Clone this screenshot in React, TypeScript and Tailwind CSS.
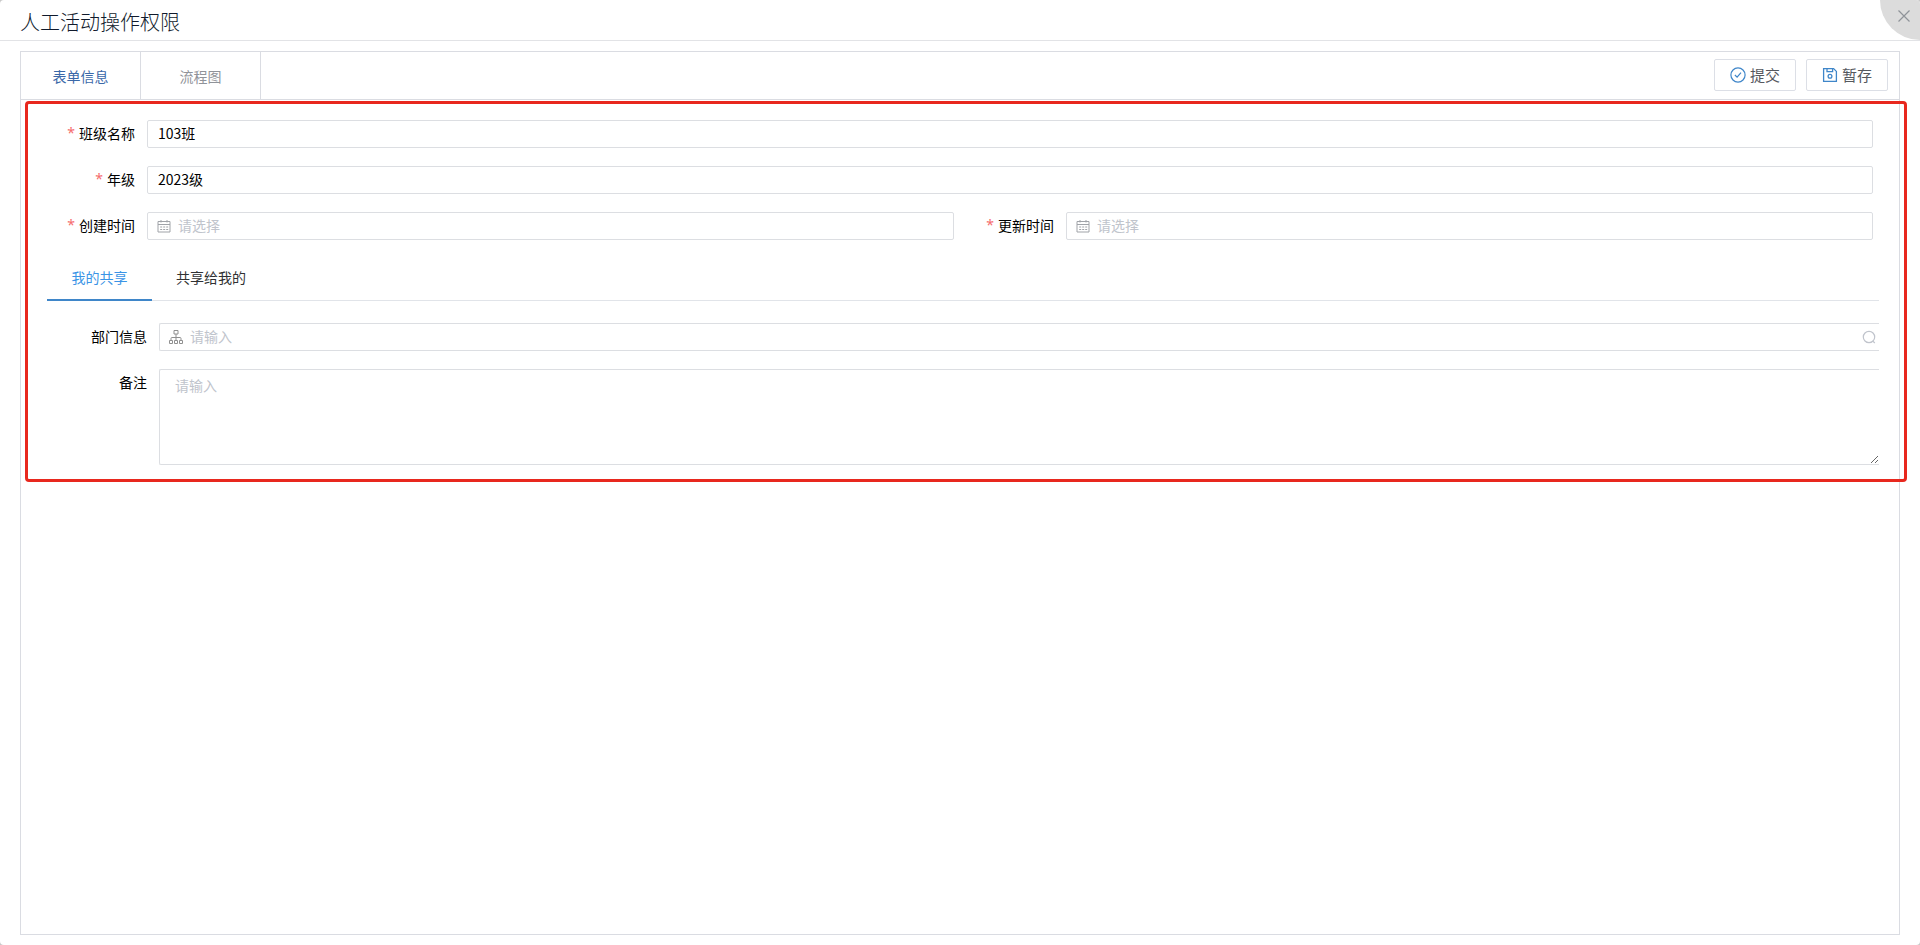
import type { ReactNode } from "react";

function CalendarIcon() {
  return (
    <svg className="size-3.5 shrink-0 text-[#a0a3a8]" viewBox="0 0 14 14" fill="none" stroke="currentColor" aria-hidden="true">
      <path d="M1 2.5h12v10.5H1zM1 5.5h12M4 1v2.5M10 1v2.5" />
      <path d="M3.2 8h8M3.2 10.5h8" strokeDasharray="2 1" />
    </svg>
  );
}

function OrgIcon() {
  return (
    <svg className="size-3.5 shrink-0 text-[#909090]" viewBox="0 0 14 14" fill="none" stroke="currentColor" aria-hidden="true">
      <path d="M5 .5h4v3.5H5zM.5 10.5h3v3h-3zM5.5 10.5h3v3h-3zM10.5 10.5h3v3h-3zM7 4v6.5M2 10.5v-2q0-1 1-1h8q1 0 1 1v2" />
    </svg>
  );
}

function SubmitIcon() {
  return (
    <svg className="size-4 shrink-0 text-[#3f86c9]" viewBox="0 0 16 16" fill="none" stroke="currentColor" strokeWidth="1.2" aria-hidden="true">
      <circle cx="8" cy="8" r="7.1" />
      <path d="M4.9 8l2.2 2.2 3.9-4.6" />
    </svg>
  );
}

function SaveIcon() {
  return (
    <svg className="size-4 shrink-0 text-[#3f86c9]" viewBox="0 0 16 16" fill="none" stroke="currentColor" strokeWidth="1.3" aria-hidden="true">
      <path d="M1.6 1.6h10l2.8 2.8v10H1.6z" />
      <path d="M5 1.6v3h5.6v-3" />
      <circle cx="8" cy="9.2" r="1.9" />
    </svg>
  );
}

function SearchIcon() {
  return (
    <svg className="size-3.5 text-[#c0c4cc]" viewBox="0 0 14 14" fill="none" stroke="currentColor" strokeWidth="1.2" aria-hidden="true">
      <circle cx="7" cy="7" r="5.7" />
      <path d="M10.6 10.8l2.2 2.2" />
    </svg>
  );
}

function Field({ id, label, required, children }: { id: string; label: string; required?: boolean; children: ReactNode }) {
  return (
    <div className="flex min-w-0 flex-1">
      <label htmlFor={id} className="flex h-7 w-28 shrink-0 items-center justify-end gap-1 pb-0.5 pr-3">
        {required && <span className="font-['Noto_Sans',sans-serif] text-[#f56c6c]">*</span>}
        {label}
      </label>
      <div className="min-w-0 flex-1">{children}</div>
    </div>
  );
}

function TextField({ id, value }: { id: string; value: string }) {
  return (
    <input id={id} defaultValue={value} className="block h-7 w-full rounded-xs border border-[#dcdee2] px-2.5 pb-0.5 outline-none" />
  );
}

function DateField({ id }: { id: string }) {
  return (
    <div className="flex h-7 items-center gap-[7px] rounded-xs border border-[#dcdee2] px-[9px]">
      <CalendarIcon />
      <input id={id} placeholder="请选择" className="h-full min-w-0 flex-1 pb-0.5 outline-none placeholder:text-[#c0c4cc]" />
    </div>
  );
}

export default function App() {
  return (
    <div className="bg-[#c8c8c8] font-['Noto_Sans_CJK_SC',sans-serif] text-sm text-black">
      <div className="relative flex min-h-screen flex-col overflow-hidden rounded-sm bg-white">
        <header className="flex h-[41px] shrink-0 items-center border-b border-[#e2e3e6] px-5 pt-1">
          <h1 className="text-xl font-light text-[#101a2c]">人工活动操作权限</h1>
        </header>
        <button
          type="button"
          aria-label="关闭"
          className="absolute right-0 top-0 flex h-10 w-10 items-start justify-end rounded-bl-full bg-[#dcdcdc] p-2.5 text-[#8f9399]"
        >
          <svg className="size-3" viewBox="0 0 12 12" fill="none" stroke="currentColor" strokeWidth="1.2" aria-hidden="true">
            <path d="M.5.5l11 11M11.5.5l-11 11" />
          </svg>
        </button>

        <main className="relative mx-5 my-2.5 flex flex-1 flex-col border border-[#dadce2]">
          <div className="flex h-12 items-stretch border-b border-[#dadce2]">
            <div role="tablist" className="flex">
              <button type="button" role="tab" aria-selected="true" className="w-[120px] border-r border-[#dadce2] text-[#3a68a8]">
                表单信息
              </button>
              <button type="button" role="tab" aria-selected="false" className="w-[120px] border-r border-[#dadce2] text-[#909399]">
                流程图
              </button>
            </div>
            <div className="ml-auto flex items-center gap-2.5 pb-0.5 pr-[11px] text-[15px] text-[#55585e]">
              <button type="button" className="flex h-8 items-center gap-1 rounded-xs border border-[#dcdfe6] px-[15px]">
                <SubmitIcon />
                提交
              </button>
              <button type="button" className="flex h-8 items-center gap-1 rounded-xs border border-[#dcdfe6] px-[15px]">
                <SaveIcon />
                暂存
              </button>
            </div>
          </div>

          <section className="-mr-2 ml-1 mt-px rounded-sm border-3 border-[#e8281e] pb-3.5">
            <form className="pl-[7px] pr-[31px] pt-4" onSubmit={(e) => e.preventDefault()}>
              <div className="flex flex-col gap-[18px]">
                <Field id="class-name" label="班级名称" required>
                  <TextField id="class-name" value="103班" />
                </Field>
                <Field id="grade" label="年级" required>
                  <TextField id="grade" value="2023级" />
                </Field>
                <div className="flex">
                  <Field id="created" label="创建时间" required>
                    <DateField id="created" />
                  </Field>
                  <Field id="updated" label="更新时间" required>
                    <DateField id="updated" />
                  </Field>
                </div>
              </div>

              <div className="-mr-1.5 ml-3 mt-[17px]">
                <div role="tablist" className="flex border-b border-[#e1e4e9]">
                  <button type="button" role="tab" aria-selected="true" className="-mb-px h-11 w-[105px] border-b-2 border-[#3f86c9] pb-0.5 text-[#3a94e6]">
                    我的共享
                  </button>
                  <button type="button" role="tab" aria-selected="false" className="h-10 px-6 text-[#303133]">
                    共享给我的
                  </button>
                </div>
                <div className="mt-[22px] flex flex-col gap-[18px]">
                  <Field id="department" label="部门信息">
                    <div className="flex h-7 items-center gap-[7px] rounded-l-xs border border-r-0 border-[#dcdee2] pl-[9px] pr-[3px]">
                      <OrgIcon />
                      <input id="department" placeholder="请输入" className="h-full min-w-0 flex-1 pb-0.5 outline-none placeholder:text-[#c0c4cc]" />
                      <button type="button" aria-label="搜索">
                        <SearchIcon />
                      </button>
                    </div>
                  </Field>
                  <Field id="remark" label="备注">
                    <textarea
                      id="remark"
                      placeholder="请输入"
                      className="block h-24 w-full resize rounded-l-xs border border-r-0 border-[#dcdee2] px-[15px] py-[5px] leading-[21px] outline-none placeholder:text-[#c0c4cc]"
                    />
                  </Field>
                </div>
              </div>
            </form>
          </section>
        </main>
      </div>
    </div>
  );
}
